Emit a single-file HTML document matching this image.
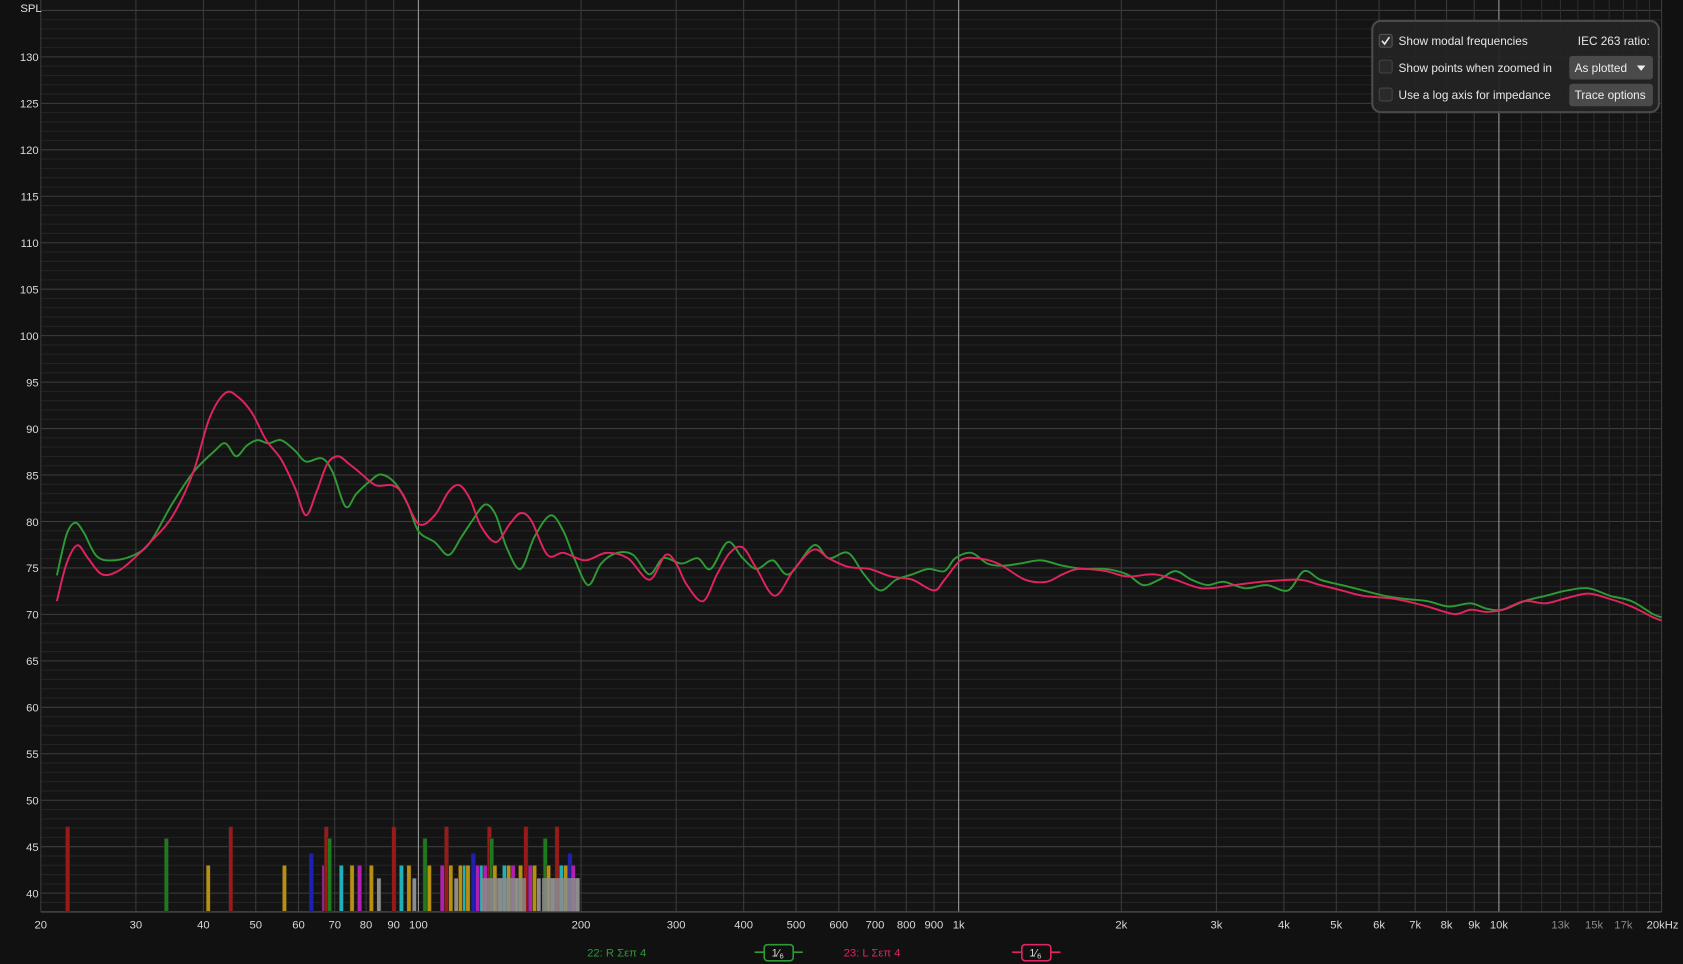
<!DOCTYPE html>
<html><head><meta charset="utf-8"><style>
html,body{margin:0;padding:0;background:#111;overflow:hidden}
svg{display:block}
text{font-family:"Liberation Sans",sans-serif}
</style></head><body>
<svg id="s" width="1683" height="964" viewBox="0 0 1568 898" preserveAspectRatio="none" xmlns="http://www.w3.org/2000/svg">
<rect width="1568" height="898" fill="#111"/>
<rect x="38" y="0" width="1510" height="849" fill="#141414"/>
<g id="grid"></g>
<g id="bars"></g>
<g id="curves"></g>
<g id="labels" font-size="10.5" fill="#d8d8d8"></g>
<text x="19" y="11" font-size="10.5" fill="#e0e0e0">SPL</text>
<g id="panel">
<rect x="1278.5" y="19.5" width="267" height="85" rx="8" fill="#242424" fill-opacity="0.93" stroke="#4a4a4a" stroke-width="2"/>
<rect x="1285" y="32" width="12" height="12" rx="2" fill="#2e2e2e" stroke="#555"/>
<path d="M1287.5 38 l2.5 3 l4.5-6.5" stroke="#e8e8e8" stroke-width="1.5" fill="none"/>
<rect x="1285" y="56" width="12" height="12" rx="2" fill="#2a2a2a" stroke="#444"/>
<rect x="1285" y="82" width="12" height="12" rx="2" fill="#2a2a2a" stroke="#444"/>
<text x="1303" y="42" font-size="11" fill="#e6e6e6">Show modal frequencies</text>
<text x="1303" y="67" font-size="11" fill="#e6e6e6">Show points when zoomed in</text>
<text x="1303" y="92" font-size="11" fill="#e6e6e6">Use a log axis for impedance</text>
<text x="1470" y="42" font-size="11" fill="#e6e6e6">IEC 263 ratio:</text>
<rect x="1462" y="52" width="78" height="22" rx="3" fill="#4a4a4a"/>
<text x="1467" y="67" font-size="11" fill="#eee">As plotted</text>
<path d="M1525 61 h8 l-4 5z" fill="#eee"/>
<rect x="1462" y="78" width="78" height="21" rx="3" fill="#4a4a4a"/>
<text x="1467" y="92" font-size="11" fill="#eee">Trace options</text>
</g>
<text x="547" y="891" font-size="10.5" fill="#2e9a35">22: R Σεπ 4</text>
<path d="M703 887 h9 M739 887 h9" stroke="#2e9a35" stroke-width="1.5"/>
<rect x="712" y="880" width="27" height="15" rx="3" fill="none" stroke="#2e9a35" stroke-width="1.5"/>
<text x="719" y="891" font-size="10" fill="#ddd">1⁄<tspan font-size="7" dy="2">6</tspan></text>
<text x="786" y="891" font-size="10.5" fill="#e0245e">23: L Σεπ 4</text>
<path d="M943 887 h9 M979 887 h9" stroke="#e0245e" stroke-width="1.5"/>
<rect x="952" y="880" width="27" height="15" rx="3" fill="none" stroke="#e0245e" stroke-width="1.5"/>
<text x="959" y="891" font-size="10" fill="#ddd">1⁄<tspan font-size="7" dy="2">6</tspan></text>
</svg>
<script>
var NS="http://www.w3.org/2000/svg";
function X(f){return 38+1510*Math.log10(f/20)/3;}
function Y(d){return 832-(d-40)*(779/90);}
function el(p,t,a){var e=document.createElementNS(NS,t);for(var k in a)e.setAttribute(k,a[k]);p.appendChild(e);return e;}
var g=document.getElementById('grid');
for(var d=38;d<=135;d++){var y=Y(d);if(y<0)continue;el(g,'line',{x1:38,x2:1548,y1:y,y2:y,stroke:d%5==0?'#3c3c3c':'#232323','stroke-width':1});}
var fs=[];
for(var dec=10;dec<=10000;dec*=10)for(var m=1;m<10;m++){var f=m*dec;if(f>=20&&f<=20000)fs.push(f);}
for(var m=11;m<20;m++)fs.push(m*1000);
fs.push(20000);
fs.forEach(function(f){var x=X(f);var major=(f==100||f==1000||f==10000);el(g,'line',{x1:x,x2:x,y1:0,y2:849,stroke:major?'#9a9a9a':(f>10000&&f<20000?'#2c2c2c':'#3a3a3a'),'stroke-width':1});});
el(g,'line',{x1:38,x2:1548,y1:849.5,y2:849.5,stroke:'#555'});
var L=document.getElementById('labels');
for(var d=40;d<=130;d+=5){var t=el(L,'text',{x:36,y:Y(d)+4,'text-anchor':'end'});t.textContent=d;}
var xl=[[20,'20'],[30,'30'],[40,'40'],[50,'50'],[60,'60'],[70,'70'],[80,'80'],[90,'90'],[100,'100'],[200,'200'],[300,'300'],[400,'400'],[500,'500'],[600,'600'],[700,'700'],[800,'800'],[900,'900'],[1000,'1k'],[2000,'2k'],[3000,'3k'],[4000,'4k'],[5000,'5k'],[6000,'6k'],[7000,'7k'],[8000,'8k'],[9000,'9k'],[10000,'10k'],[13000,'13k',1],[15000,'15k',1],[17000,'17k',1]];
xl.forEach(function(a){var t=el(L,'text',{x:X(a[0]),y:865,'text-anchor':'middle'});if(a[2])t.setAttribute('fill','#8a8a8a');t.textContent=a[1];});
var t=el(L,'text',{x:1549,y:865,'text-anchor':'middle'});t.textContent='20kHz';
// bars
var B=document.getElementById('bars');
var C={r:'#9a1a1a',g:'#1d7a1d',y:'#b8900f',b:'#2020b0',c:'#20b0b8',m:'#b020b0',w:'#8c8c8c'};
var H={r:770,g:781,y:806,b:795,c:806,m:806,w:818};
var bars=[[63,'r'],[155,'g'],[194,'y'],[215,'r'],[265,'y'],[290,'b'],[302,'m'],[304,'r'],[307,'g'],[318,'c'],[328,'y'],[335,'m'],[346,'y'],[353,'w'],[367,'r'],[374,'c'],[381,'y'],[386,'w'],[396,'g'],[400,'y'],[412,'m'],[416,'r'],[420,'y'],[425,'w'],[429,'y'],[433,'c'],[436,'y'],[441,'b'],[445,'m'],[449,'c'],[452,'m'],[456,'r'],[458,'g'],[461,'y'],[466,'w'],[470,'c'],[474,'y'],[478,'m'],[481,'w'],[485,'y'],[490,'r'],[494,'m'],[498,'y'],[502,'w'],[508,'g'],[511,'y'],[515,'w'],[519,'r'],[523,'c'],[527,'y'],[531,'b'],[534,'m'],[538,'w']];
var order={y:0,c:0,m:0,b:0,g:0,r:0,w:1};
bars.sort(function(a,b){return order[a[1]]-order[b[1]];});
bars.forEach(function(b){var h=H[b[1]];el(B,'rect',{x:b[0]-2,y:h,width:4,height:849-h,fill:C[b[1]],stroke:'#222','stroke-width':0.5});});
[[448,470],[470,490],[505,540]].forEach(function(r){el(B,'rect',{x:r[0],y:818,width:r[1]-r[0],height:31,fill:'#8c8c8c','fill-opacity':0.85});});
// curves
var green=[[53,536],[62,498],[70,487],[78,496],[90,518],[105,522],[125,517],[140,505],[160,470],[180,440],[200,420],[210,413],[220,425],[230,415],[240,410],[250,413],[262,410],[275,420],[285,430],[300,427],[310,440],[322,472],[332,460],[345,448],[355,442],[368,450],[380,470],[390,495],[405,505],[418,517],[430,500],[440,485],[452,470],[462,480],[472,510],[485,530],[498,500],[513,480],[525,495],[535,520],[548,545],[560,525],[575,515],[590,517],[605,535],[618,520],[635,525],[650,520],[662,530],[678,505],[692,520],[705,530],[720,522],[735,535],[758,508],[772,520],[790,515],[805,535],[820,550],[835,540],[850,535],[865,530],[880,532],[890,520],[905,515],[920,525],[935,527],[950,525],[970,522],[990,527],[1010,530],[1030,530],[1050,535],[1065,545],[1080,540],[1095,532],[1110,540],[1125,545],[1140,542],[1160,548],[1180,545],[1200,550],[1215,532],[1230,540],[1250,545],[1270,550],[1290,555],[1310,558],[1330,560],[1350,565],[1370,562],[1385,567],[1400,568],[1420,560],[1440,555],[1460,550],[1480,548],[1500,555],[1520,560],[1540,572],[1548,575]];
var red=[[53,560],[62,525],[72,508],[82,520],[95,535],[110,532],[125,520],[140,505],[160,482],[180,440],[195,390],[210,366],[222,370],[235,385],[248,410],[262,428],[275,455],[285,480],[295,458],[305,432],[315,425],[325,432],[335,440],[350,452],[365,452],[375,460],[390,488],[405,480],[418,458],[428,452],[438,465],[448,490],[462,505],[475,488],[485,478],[495,485],[510,517],[525,515],[545,522],[565,515],[585,520],[605,540],[620,517],[630,525],[640,545],[655,560],[668,535],[680,515],[692,510],[705,530],[722,555],[740,530],[758,512],[772,520],[790,528],[810,530],[830,537],[850,540],[870,550],[880,540],[895,522],[910,520],[930,525],[955,540],[975,542],[990,535],[1005,530],[1030,532],[1050,537],[1075,535],[1095,540],[1120,548],[1150,545],[1175,542],[1210,540],[1230,545],[1250,550],[1270,555],[1300,558],[1330,565],[1355,572],[1370,568],[1385,570],[1400,568],[1420,560],[1440,562],[1460,557],[1480,553],[1500,558],[1520,565],[1540,575],[1548,578]];
function path(p){var d='M'+p[0][0]+' '+p[0][1];for(var i=0;i<p.length-1;i++){var p0=p[i-1]||p[i],p1=p[i],p2=p[i+1],p3=p[i+2]||p2;d+=' C'+(p1[0]+(p2[0]-p0[0])/6)+' '+(p1[1]+(p2[1]-p0[1])/6)+' '+(p2[0]-(p3[0]-p1[0])/6)+' '+(p2[1]-(p3[1]-p1[1])/6)+' '+p2[0]+' '+p2[1];}return d;}
var CV=document.getElementById('curves');
el(CV,'path',{d:path(green),stroke:'#2e9a35','stroke-width':1.8,fill:'none'});
el(CV,'path',{d:path(red),stroke:'#e0245e','stroke-width':1.8,fill:'none'});
document.getElementById('s').appendChild(document.getElementById('panel'));
</script>
</body></html>
